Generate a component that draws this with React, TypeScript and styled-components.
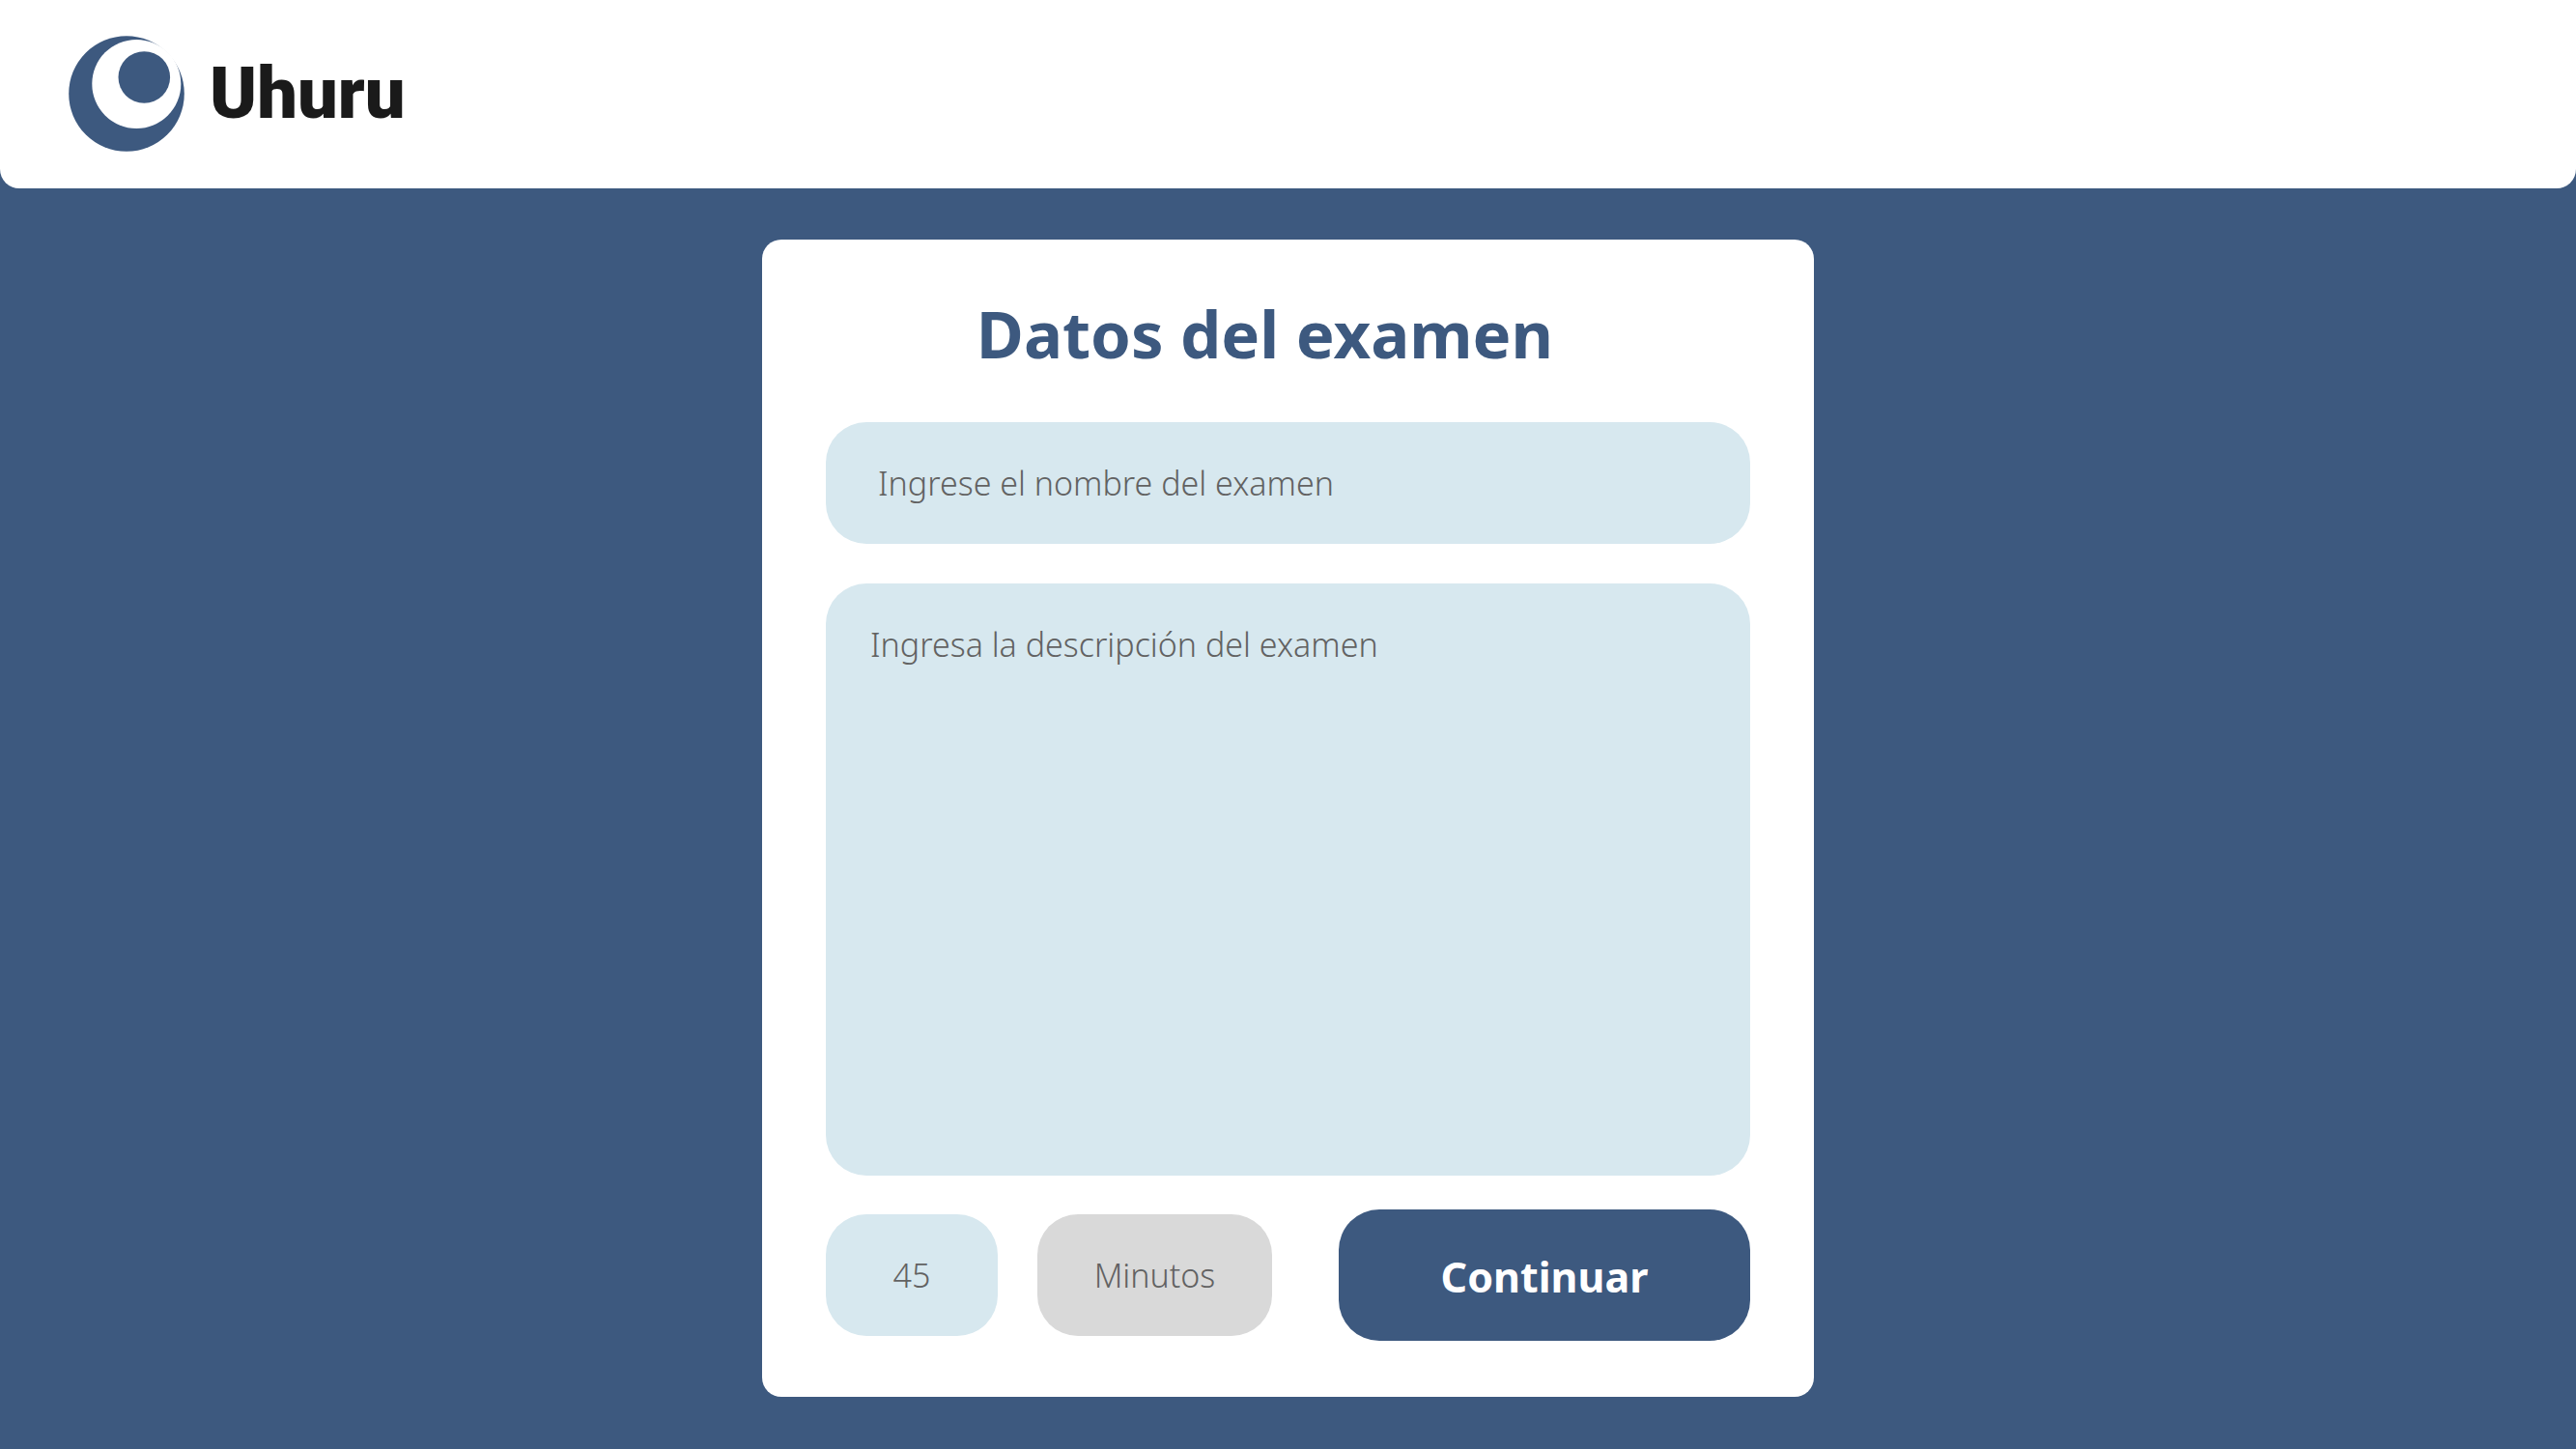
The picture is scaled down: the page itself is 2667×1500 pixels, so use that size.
import React from 'react';
import styled, { createGlobalStyle } from 'styled-components';

const color = {
  brand: '#3d597f',
  field: '#d7e8ef',
  muted: '#d9d9d9',
  hint: '#626262',
  ink: '#1a1a1a',
};

const GlobalStyle = createGlobalStyle`
  *, *::before, *::after { box-sizing: border-box; }
  body {
    margin: 0;
    background: ${color.brand};
    font-family: 'Noto Sans', 'Open Sans', sans-serif;
  }
`;

const Page = styled.div`
  display: flex;
  flex-direction: column;
  min-height: 100vh;
`;

const Header = styled.header`
  display: flex;
  align-items: center;
  padding: 37px 71px 38px;
  background: #fff;
  border-radius: 0 0 20px 20px;
`;

const Brand = styled.a`
  display: flex;
  align-items: center;
  gap: 26px;
  color: ${color.ink};
  text-decoration: none;
`;

const BrandMark = styled.svg`
  width: 120px;
  height: 120px;
`;

const BrandName = styled.span`
  font-family: Roboto, 'Noto Sans', sans-serif;
  font-size: 74px;
  font-weight: 900;
  line-height: 80px;
`;

const Main = styled.main`
  display: flex;
  justify-content: center;
  padding: 53px 24px;
`;

const Card = styled.form`
  display: flex;
  flex-direction: column;
  gap: 41px;
  width: 100%;
  max-width: 1089px;
  padding: 52px 66px 58px;
  background: #fff;
  border-radius: 20px;
`;

const Title = styled.h1`
  margin: 0;
  padding: 0 48px 6px 0;
  color: ${color.brand};
  font-size: 67px;
  font-weight: 700;
  line-height: 90px;
  text-align: center;
`;

const fieldStyles = `
  display: block;
  width: 100%;
  border: 0;
  border-radius: 42px;
  color: ${color.hint};
  font-family: inherit;
  font-size: 34px;
  font-weight: 300;
  line-height: 48px;
  &::placeholder { color: ${color.hint}; opacity: 1; }
`;

const TextField = styled.input`
  ${fieldStyles}
  height: 126px;
  padding: 0 54px;
  background: ${color.field};
`;

const TextArea = styled.textarea`
  ${fieldStyles}
  height: 613px;
  padding: 39px 46px;
  background: ${color.field};
  resize: none;
`;

const Actions = styled.div`
  display: flex;
  align-items: center;
  gap: 41px;
  margin-top: -6px;
`;

const ShortField = styled.input<{ $width: number; $muted?: boolean }>`
  ${fieldStyles}
  width: ${(p) => p.$width}px;
  height: 126px;
  padding: 0;
  background: ${(p) => (p.$muted ? color.muted : color.field)};
  text-align: center;
`;

const SubmitButton = styled.button`
  width: 426px;
  height: 136px;
  margin-left: auto;
  padding: 4px 0 0;
  border: 0;
  border-radius: 42px;
  background: ${color.brand};
  color: #fff;
  font-family: inherit;
  font-size: 43px;
  font-weight: 700;
  line-height: 60px;
`;

export default function App() {
  return (
    <>
      <GlobalStyle />
      <Page>
        <Header>
          <Brand href="#">
            <BrandMark viewBox="0 0 120 120" aria-hidden="true">
              <circle cx="60" cy="60" r="59.8" fill={color.brand} />
              <circle cx="70.3" cy="49.9" r="46" fill="#fff" />
              <circle cx="78.3" cy="43" r="26.8" fill={color.brand} />
            </BrandMark>
            <BrandName>Uhuru</BrandName>
          </Brand>
        </Header>
        <Main>
          <Card onSubmit={(e) => e.preventDefault()}>
            <Title>Datos del examen</Title>
            <TextField
              type="text"
              aria-label="Nombre del examen"
              placeholder="Ingrese el nombre del examen"
            />
            <TextArea
              aria-label="Descripción del examen"
              placeholder="Ingresa la descripción del examen"
            />
            <Actions>
              <ShortField
                type="text"
                inputMode="numeric"
                aria-label="Duración"
                placeholder="45"
                $width={178}
              />
              <ShortField
                type="text"
                aria-label="Unidad de tiempo"
                value="Minutos"
                readOnly
                $width={243}
                $muted
              />
              <SubmitButton type="submit">Continuar</SubmitButton>
            </Actions>
          </Card>
        </Main>
      </Page>
    </>
  );
}
